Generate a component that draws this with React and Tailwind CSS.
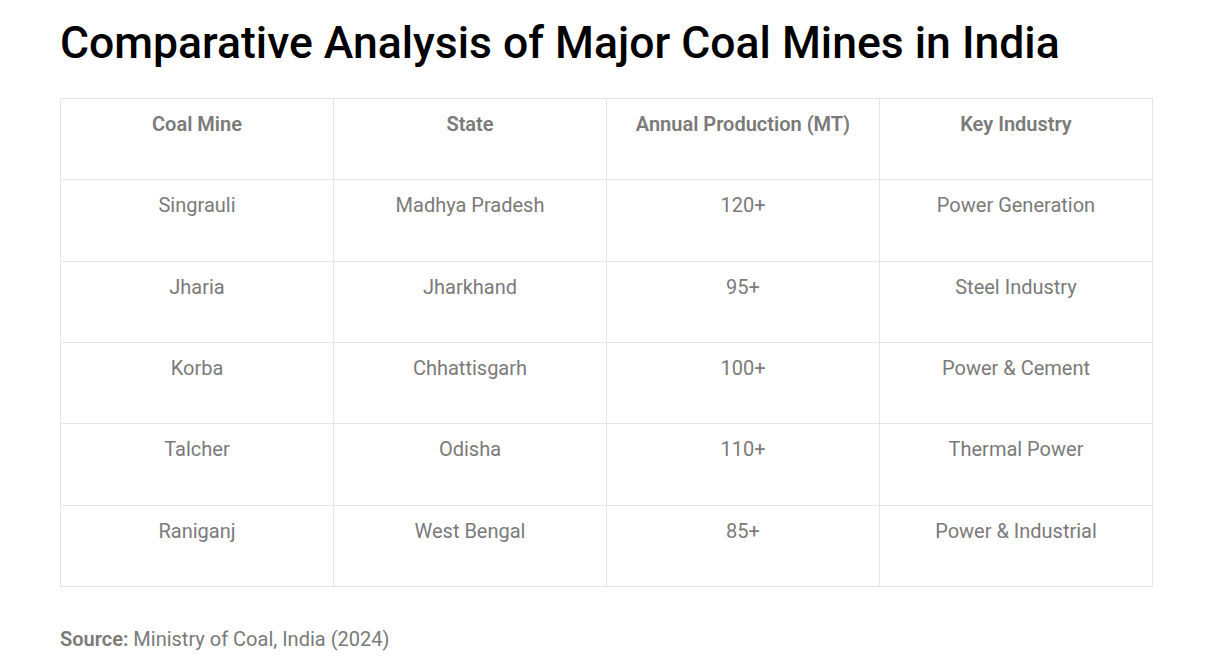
const rows = [
  ["Singrauli", "Madhya Pradesh", "120+", "Power Generation"],
  ["Jharia", "Jharkhand", "95+", "Steel Industry"],
  ["Korba", "Chhattisgarh", "100+", "Power & Cement"],
  ["Talcher", "Odisha", "110+", "Thermal Power"],
  ["Raniganj", "West Bengal", "85+", "Power & Industrial"],
];

const headers = ["Coal Mine", "State", "Annual Production (MT)", "Key Industry"];

export default function App() {
  return (
    <div className="min-h-[666px] bg-white px-[60px] pt-[17px] font-['Roboto',sans-serif]">
      <h1 className="text-[44.5px] leading-[53px] font-medium text-black">
        Comparative Analysis of Major Coal Mines in India
      </h1>
      <table className="mt-[28px] w-[1093px] table-fixed border-collapse text-[20px] leading-[30px] text-[#7a7a7a]">
        <thead>
          <tr>
            {headers.map((h) => (
              <th
                key={h}
                className="h-[81.33px] border border-[#e5e5e5] px-4 pt-[10px] align-top font-semibold"
              >
                {h}
              </th>
            ))}
          </tr>
        </thead>
        <tbody>
          {rows.map((r) => (
            <tr key={r[0]}>
              {r.map((c, i) => (
                <td
                  key={i}
                  className="h-[81.33px] border border-[#e5e5e5] px-4 pt-[10px] text-center align-top"
                >
                  {c}
                </td>
              ))}
            </tr>
          ))}
        </tbody>
      </table>
      <p className="mt-[37px] text-[20px] leading-[30px] text-[#7a7a7a]">
        <span className="font-semibold">Source:</span> Ministry of Coal, India (2024)
      </p>
    </div>
  );
}
